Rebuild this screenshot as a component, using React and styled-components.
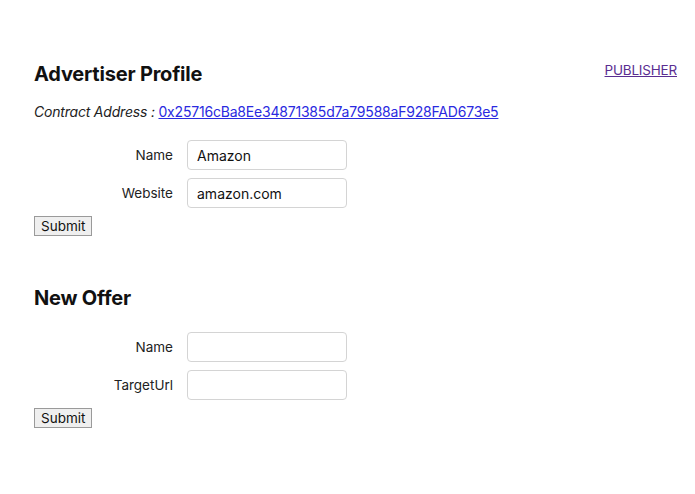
import React from 'react';
import styled, {createGlobalStyle} from 'styled-components';

const Global = createGlobalStyle`
  body {
    margin: 0;
    background: #fff;
    font-family: Inter, "Noto Sans", sans-serif;
    color: #111;
  }
`;

const Page = styled.div`
  display: flex;
  justify-content: space-between;
  align-items: flex-start;
  padding: 62px 18px 0 34px;
`;

const Main = styled.div`
  display: flex;
  flex-direction: column;
  margin-top: -1px;
`;

const Section = styled.section`
  display: flex;
  flex-direction: column;
  margin-bottom: ${p => p.gap || '0px'};
`;

const Heading = styled.h2`
  margin: 0;
  font-size: 20px;
  font-weight: 700;
  line-height: 26px;
  letter-spacing: -0.2px;
`;

const Address = styled.p`
  margin: 15px 0 0;
  font-size: 14px;
  line-height: 20px;
  letter-spacing: -0.2px;
  font-style: italic;
  color: #222;
`;

const AddressLink = styled.a`
  font-style: normal;
  color: #2a2ae0;
  text-decoration: underline;
`;

const Form = styled.form`
  display: grid;
  grid-template-columns: 139px 160px;
  column-gap: 14px;
  row-gap: 8px;
  align-items: center;
  margin-top: ${p => p.top};
`;

const Label = styled.label`
  text-align: right;
  font-size: 13.5px;
  color: #222;
`;

const Input = styled.input`
  box-sizing: border-box;
  width: 160px;
  height: 30px;
  padding: 0 9px;
  border: 1px solid #d4d4d4;
  border-radius: 4px;
  font-family: inherit;
  font-size: 14px;
  color: #111;
  outline: none;
`;

const Button = styled.button`
  align-self: flex-start;
  box-sizing: border-box;
  margin-top: 8px;
  height: 20px;
  padding: 0 6px;
  background: #efefef;
  border: 1px solid #9a9a9a;
  border-radius: 0;
  font-family: inherit;
  font-size: 13.5px;
  line-height: 18px;
  color: #111;
`;

const NavLink = styled.a`
  font-size: 13.5px;
  letter-spacing: -0.2px;
  color: #5a2d91;
  text-decoration: underline;
`;

const ProfileForm = ({fields, top}) => (
  <Form top={top} onSubmit={e => e.preventDefault()}>
    {fields.map(f => (
      <React.Fragment key={f.label}>
        <Label>{f.label}</Label>
        <Input defaultValue={f.value} />
      </React.Fragment>
    ))}
  </Form>
);

const App = () => (
  <>
    <Global />
    <Page>
      <Main>
        <Section gap="49px">
          <Heading>Advertiser Profile</Heading>
          <Address>
            Contract Address : <AddressLink href="#">0x25716cBa8Ee34871385d7a79588aF928FAD673e5</AddressLink>
          </Address>
          <ProfileForm
            top="18px"
            fields={[
              {label: 'Name', value: 'Amazon'},
              {label: 'Website', value: 'amazon.com'},
            ]}
          />
          <Button>Submit</Button>
        </Section>
        <Section>
          <Heading>New Offer</Heading>
          <ProfileForm
            top="21px"
            fields={[
              {label: 'Name', value: ''},
              {label: 'TargetUrl', value: ''},
            ]}
          />
          <Button>Submit</Button>
        </Section>
      </Main>
      <NavLink href="#">PUBLISHER</NavLink>
    </Page>
  </>
);

export default App;
